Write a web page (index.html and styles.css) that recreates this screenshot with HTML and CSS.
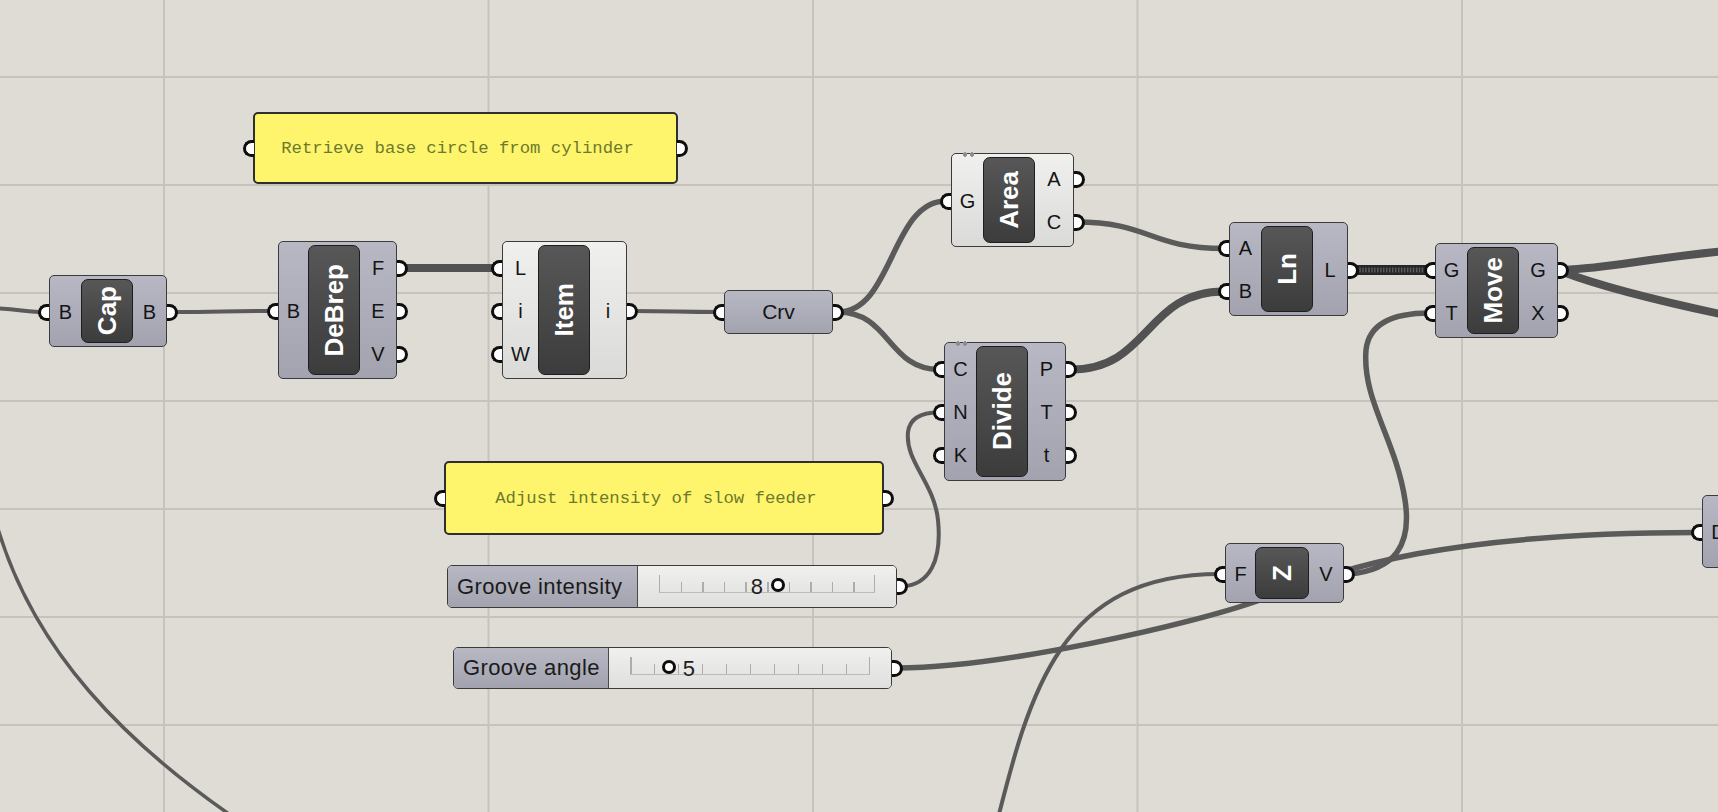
FILE: index.html
```html
<!DOCTYPE html>
<html lang="en">
<head>
  <meta charset="UTF-8" />
  <title>Slow Feeder Definition</title>
  <link rel="stylesheet" href="styles.css">
</head>
<body>
<div class="canvas">

  <!-- wires sit under every component -->
  <svg class="wires" width="1718" height="812" viewBox="0 0 1718 812">
    <path class="arc" d="M-4,522 C32,650 126,745 245,825" />
    <path class="thin" d="M-10,308 C15,309 30,312 44,312" />
    <path class="thin" d="M172,312 C222,312 223,311 273,311" />
    <path class="thick" d="M402,268 C450,268 450,268 497,268" />
    <path class="thin" d="M632,311 C676,311 676,312 719,312" />
    <path class="mid" d="M838,312 C893,312 891,201 946,201" />
    <path class="mid" d="M838,312 C890,312 888,369.5 939,369.5" />
    <path class="mid" d="M1076,222 C1150,222 1150,248.5 1224,248.5" />
    <path class="thick" d="M1071,369.5 C1150,369.5 1145,291.5 1224,291.5" />
    <path class="tree" d="M1353,270 C1390,270 1393,270 1430,270" />
    <path class="tree-dots" d="M1353,270 C1390,270 1393,270 1430,270" />
    <path class="thick" d="M1563,270 C1610,268 1650,258 1725,251" />
    <path class="thick" d="M1563,272 C1592,283 1640,297 1725,315" />
    <path class="mid" d="M1349,574 C1395,570 1412,545 1405,500 C1396,440 1362,400 1366,350 C1369,322 1395,313 1430,313" />
    <path class="thin" d="M902,586.5 C930,585 942,560 938,520 C934,482 905,462 908,432 C910,416 925,412.5 939,412.5" />
    <path class="mid" d="M897,668 C1000,668 1190,625 1260,600 C1330,575 1420,533 1697,532.5" />
    <path class="thin" d="M995,830 C1030,690 1060,574 1220,574" />
  </svg>

  <!-- notes -->
  <div class="panel panel-base">Retrieve base circle from cylinder</div>
  <div class="panel panel-feed">Adjust intensity of slow feeder</div>

  <!-- components -->
  <div class="comp n-cap">
    <div class="ins"><span class="pin">B</span></div>
    <div class="core"><span>Cap</span></div>
    <div class="outs"><span class="pin">B</span></div>
  </div>

  <div class="comp n-debrep">
    <div class="ins"><span class="pin">B</span></div>
    <div class="core"><span>DeBrep</span></div>
    <div class="outs">
      <span class="pin">F</span>
      <span class="pin">E</span>
      <span class="pin">V</span>
    </div>
  </div>

  <div class="comp light n-item">
    <div class="ins">
      <span class="pin">L</span>
      <span class="pin">i</span>
      <span class="pin">W</span>
    </div>
    <div class="core"><span>Item</span></div>
    <div class="outs"><span class="pin">i</span></div>
  </div>

  <div class="param n-crv">Crv</div>

  <div class="comp light n-area">
    <i class="flag"></i>
    <div class="ins"><span class="pin">G</span></div>
    <div class="core"><span>Area</span></div>
    <div class="outs">
      <span class="pin">A</span>
      <span class="pin">C</span>
    </div>
  </div>

  <div class="comp n-divide">
    <i class="flag"></i>
    <div class="ins">
      <span class="pin">C</span>
      <span class="pin">N</span>
      <span class="pin">K</span>
    </div>
    <div class="core"><span>Divide</span></div>
    <div class="outs">
      <span class="pin">P</span>
      <span class="pin">T</span>
      <span class="pin">t</span>
    </div>
  </div>

  <div class="comp n-ln">
    <div class="ins">
      <span class="pin">A</span>
      <span class="pin">B</span>
    </div>
    <div class="core"><span>Ln</span></div>
    <div class="outs"><span class="pin">L</span></div>
  </div>

  <div class="comp n-move">
    <div class="ins">
      <span class="pin">G</span>
      <span class="pin">T</span>
    </div>
    <div class="core"><span>Move</span></div>
    <div class="outs">
      <span class="pin">G</span>
      <span class="pin">X</span>
    </div>
  </div>

  <div class="comp n-z">
    <div class="ins"><span class="pin">F</span></div>
    <div class="core"><span>Z</span></div>
    <div class="outs"><span class="pin">V</span></div>
  </div>

  <div class="comp n-d">
    <div class="ins"><span class="pin">D</span></div>
    <div class="core"><span>Div</span></div>
  </div>

  <!-- number sliders -->
  <div class="slider s-intensity">
    <div class="slabel">Groove intensity</div>
    <div class="strack">
      <div class="rail" style="--v:55.2%">
        <span class="ticks"></span>
        <span class="val before">8</span>
        <span class="knob"></span>
      </div>
    </div>
  </div>

  <div class="slider s-angle">
    <div class="slabel">Groove angle</div>
    <div class="strack">
      <div class="rail" style="--v:16.1%">
        <span class="ticks"></span>
        <span class="val after">5</span>
        <span class="knob"></span>
      </div>
    </div>
  </div>

</div>
</body>
</html>
```

FILE: styles.css
```css
body {
  margin: 0;
  overflow: hidden;
  font-family: "Liberation Sans", Arial, sans-serif;
}

/* canvas + grid */
.canvas {
  position: relative;
  width: 1718px;
  height: 812px;
  overflow: hidden;
  background-color: #dfdcd5;
  background-image:
    linear-gradient(to right, #c6c3bc 2px, transparent 2px),
    linear-gradient(to bottom, #c6c3bc 2px, transparent 2px);
  background-size: 324.5px 100%, 100% 108px;
  background-position: 163px 0, 0 76px;
}

/* wires */
.wires {
  position: absolute;
  left: 0;
  top: 0;
}
.wires path {
  fill: none;
  stroke: #5a5a5a;
  stroke-linecap: round;
}
.wires .arc { stroke-width: 3.5; }
.wires .thin { stroke-width: 4; }
.wires .mid { stroke-width: 5.5; }
.wires .thick { stroke-width: 8; stroke: #525252; }
.wires .tree { stroke-width: 10; stroke: #262626; }
.wires .tree-dots { stroke-width: 5; stroke: #5c5c5c; stroke-dasharray: 1.5 1.5; stroke-linecap: butt; }

/* shared port nub */
.pin::before,
.pin::after,
.panel::before,
.panel::after,
.param::before,
.param::after,
.slider::after {
  position: absolute;
  top: 50%;
  width: 11px;
  height: 17px;
  margin-top: -8.5px;
  box-sizing: border-box;
  border: 3.5px solid #0e0e0e;
  background: #fff;
}
.ins .pin::before,
.panel::before,
.param::before {
  content: "";
  left: -12px;
  border-right: 0;
  border-radius: 9px 0 0 9px;
}
.outs .pin::after,
.panel::after,
.param::after,
.slider::after {
  content: "";
  right: -12px;
  border-left: 0;
  border-radius: 0 9px 9px 0;
}

/* components */
.comp {
  position: absolute;
  box-sizing: border-box;
  display: flex;
  border: 1.5px solid #3b3b3b;
  border-radius: 5px;
  background: linear-gradient(#b7b8c4, #a2a3af);
}
.comp.light {
  background: linear-gradient(#f0f0ee, #dadad8);
}
.ins,
.outs {
  display: flex;
  flex-direction: column;
  justify-content: center;
  padding-top: 2px;
}
.ins {
  width: 31px;
}
.outs {
  flex: 1;
}
.pin {
  position: relative;
  height: 43px;
  display: flex;
  align-items: center;
  justify-content: center;
  font-size: 20px;
  color: #141414;
}
.core {
  width: 52px;
  margin: 3px 0;
  box-sizing: border-box;
  border: 1.5px solid #1e1e1e;
  border-radius: 7px;
  background: linear-gradient(#575757, #3c3c3c);
  display: flex;
  align-items: center;
  justify-content: center;
}
.core span {
  writing-mode: vertical-rl;
  transform: rotate(180deg);
  color: #fff;
  font-weight: bold;
  font-size: 26px;
  line-height: 1;
}
.flag {
  position: absolute;
  top: -2px;
  left: 10px;
  width: 14px;
  height: 5px;
  background:
    radial-gradient(circle at 3px 2.5px, #8d8d8d 2px, transparent 2.5px),
    radial-gradient(circle at 10px 2.5px, #8d8d8d 2px, transparent 2.5px);
}

.n-cap { left: 49px; top: 275px; width: 118px; height: 72px; }
.n-debrep { left: 278px; top: 241px; width: 119px; height: 138px; }
.n-debrep .ins { width: 29px; }
.n-item { left: 502px; top: 241px; width: 125px; height: 138px; }
.n-item .ins { width: 35px; }
.n-area { left: 951px; top: 153px; width: 123px; height: 94px; }
.n-ln { left: 1229px; top: 222px; width: 119px; height: 94px; }
.n-move { left: 1435px; top: 243px; width: 123px; height: 95px; }
.n-divide { left: 944px; top: 342px; width: 122px; height: 139px; }
.n-z { left: 1225px; top: 543px; width: 119px; height: 60px; }
.n-z .ins { width: 29px; }
.n-z .core { width: 54px; }
.n-d { left: 1702px; top: 495px; width: 120px; height: 73px; }

/* floating parameter */
.param {
  position: absolute;
  box-sizing: border-box;
  display: flex;
  align-items: center;
  justify-content: center;
  border: 1.5px solid #3b3b3b;
  border-radius: 5px;
  background: linear-gradient(#b7b8c4, #a2a3af);
  font-size: 21px;
  color: #141414;
}
.n-crv { left: 724px; top: 290px; width: 109px; height: 44px; }

/* yellow notes */
.panel {
  position: absolute;
  box-sizing: border-box;
  display: flex;
  align-items: center;
  justify-content: center;
  padding-right: 16px;
  background: #fff56d;
  border: 2px solid #2f2f2f;
  border-radius: 5px;
  font-family: "Liberation Mono", "Courier New", monospace;
  font-size: 17.3px;
  color: #6c7a2b;
  white-space: nowrap;
}
.panel-base { left: 253px; top: 112px; width: 425px; height: 72px; }
.panel-feed { left: 444px; top: 461px; width: 440px; height: 74px; }

/* sliders */
.slider {
  position: absolute;
  box-sizing: border-box;
  display: flex;
  border: 1.5px solid #3b3b3b;
  border-radius: 5px;
}
.slabel {
  box-sizing: border-box;
  display: flex;
  align-items: center;
  padding-left: 9px;
  background: linear-gradient(#b7b8c4, #a2a3af);
  border-right: 1.5px solid #4a4a4a;
  border-radius: 4px 0 0 4px;
  font-size: 22px;
  letter-spacing: 0.4px;
  color: #1b1b1b;
  white-space: nowrap;
}
.strack {
  flex: 1;
  padding: 0 21px;
  background: linear-gradient(#f0f0ee, #dfdfdd);
  border-radius: 0 4px 4px 0;
}
.rail {
  position: relative;
  height: 100%;
}
.ticks {
  position: absolute;
  left: 0;
  right: 0;
  top: 16px;
  height: 10px;
  border-bottom: 1.5px solid #bbbbbb;
  background: repeating-linear-gradient(to right, #adadad 0 1.5px, transparent 1.5px 10%);
}
.ticks::before,
.ticks::after {
  content: "";
  position: absolute;
  bottom: 0;
  width: 1.5px;
  height: 17px;
  background: #adadad;
}
.ticks::before { left: 0; }
.ticks::after { right: 0; }
.knob {
  position: absolute;
  left: var(--v);
  top: 12px;
  width: 14px;
  height: 14px;
  margin-left: -7px;
  box-sizing: border-box;
  border: 3.5px solid #0d0d0d;
  border-radius: 50%;
  background: #fff;
}
.val {
  position: absolute;
  top: 8px;
  font-size: 22px;
  line-height: 26px;
  color: #1e1e1e;
}
.val.before { right: calc(100% - var(--v) + 15px); }
.val.after { left: calc(var(--v) + 14px); }

.s-intensity { left: 447px; top: 565px; width: 450px; height: 43px; }
.s-intensity .slabel { width: 189.5px; }
.s-angle { left: 453px; top: 647px; width: 439px; height: 42px; }
.s-angle .slabel { width: 155px; }
```
